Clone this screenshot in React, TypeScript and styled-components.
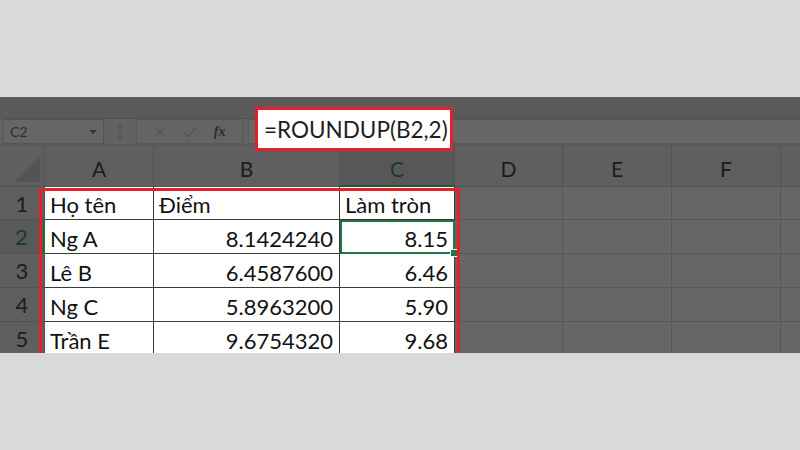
import React from "react";
import styled, { createGlobalStyle } from "styled-components";

const Global = createGlobalStyle`
  html, body { margin: 0; padding: 0; background: #d9d9d9; }
  body { width: 800px; height: 450px; overflow: hidden; font-family: Lato, "Liberation Sans", sans-serif; }
`;

const Page = styled.div`
  position: relative;
  width: 800px;
  height: 450px;
  display: flex;
  flex-direction: column;
  background: #d9d9d9;
  overflow: hidden;
`;

const Spacer = styled.div<{ $h: number }>`
  height: ${(p) => p.$h}px;
  flex: none;
`;

const Excel = styled.div`
  position: relative;
  height: 256px;
  flex: none;
  display: flex;
  flex-direction: column;
  background: #666666;
  overflow: hidden;
`;

const Ribbon = styled.div`
  height: 22px;
  flex: none;
  background: #5a5a5a;
  border-bottom: 1px solid #525252;
  box-sizing: border-box;
`;

const FormulaRow = styled.div`
  height: 26px;
  flex: none;
  display: flex;
  align-items: stretch;
  background: #626262;
  padding-left: 3px;
  box-sizing: border-box;
  border-bottom: 1px solid #585858;
`;

const NameBox = styled.div`
  width: 101px;
  box-sizing: border-box;
  border: 1px solid #565656;
  background: #666666;
  display: flex;
  align-items: center;
  justify-content: space-between;
  padding: 0 6px 0 6px;
  font-family: Lato, "Liberation Sans", sans-serif;
  font-size: 14px;
  color: #2f2f2f;
`;

const Caret = styled.span`
  width: 0;
  height: 0;
  border-left: 4px solid transparent;
  border-right: 4px solid transparent;
  border-top: 4px solid #333;
`;

const Grip = styled.div`
  width: 32px;
  display: flex;
  align-items: center;
  justify-content: center;
`;

const FuncBox = styled.div`
  width: 107px;
  box-sizing: border-box;
  border: 1px solid #595959;
  background: #646464;
  display: flex;
  align-items: center;
  justify-content: space-around;
  padding: 0 8px;
`;

const Fx = styled.span`
  font-family: "Liberation Serif", serif;
  font-style: italic;
  font-weight: bold;
  font-size: 14px;
  color: #2e2e2e;
`;

const FormulaInput = styled.div`
  flex: 1;
  margin-left: 5px;
  background: #676767;
  border: 1px solid #595959;
  border-right: none;
`;

const Grid = styled.div`
  flex: 1;
  display: grid;
  grid-template-columns: 45px 109px 186px 115px 108px 109px 109px 109px;
  grid-template-rows: 42px 33px 34px 34px 34px 34px;
`;

const Corner = styled.div`
  background: #5f5f5f;
  border-right: 1px solid #545454;
  border-bottom: 1px solid #545454;
  box-sizing: border-box;
  display: flex;
  align-items: flex-end;
  justify-content: flex-end;
  padding: 0 4px 4px 0;
`;

const ColHead = styled.div<{ $active?: boolean }>`
  background: ${(p) => (p.$active ? "#575757" : "#5f5f5f")};
  border-right: 1px solid #535353;
  border-bottom: ${(p) => (p.$active ? "2px solid #1f5a35" : "1px solid #545454")};
  box-sizing: border-box;
  display: flex;
  align-items: center;
  justify-content: center;
  padding-top: 6px;
  font-family: Lato, "Liberation Sans", sans-serif;
  font-size: 21px;
  color: ${(p) => (p.$active ? "#173d24" : "#1c1c1c")};
`;

const RowHead = styled.div<{ $active?: boolean }>`
  background: ${(p) => (p.$active ? "#595959" : "#5f5f5f")};
  border-right: ${(p) => (p.$active ? "2px solid #1f6a3c" : "1px solid #545454")};
  border-bottom: 1px solid #545454;
  box-sizing: border-box;
  display: flex;
  align-items: center;
  justify-content: center;
  font-family: Lato, "Liberation Sans", sans-serif;
  font-size: 22px;
  color: ${(p) => (p.$active ? "#173d24" : "#1c1c1c")};
`;

const Cell = styled.div<{ $filled?: boolean; $right?: boolean; $selected?: boolean }>`
  position: relative;
  background: ${(p) => (p.$filled ? "#ffffff" : "#666666")};
  border-right: 1px solid ${(p) => (p.$filled ? "#3a3a3a" : "#585858")};
  border-bottom: 1px solid ${(p) => (p.$filled ? "#3a3a3a" : "#585858")};
  box-sizing: border-box;
  display: flex;
  align-items: center;
  justify-content: ${(p) => (p.$right ? "flex-end" : "flex-start")};
  padding: 3px 6px 0 5px;
  font-family: Lato, "Liberation Sans", sans-serif;
  font-size: 22px;
  color: #111;
  white-space: nowrap;
  ${(p) => (p.$selected ? "outline: 2px solid #217346; outline-offset: -2px;" : "")}
`;

const Handle = styled.span`
  position: absolute;
  right: -4px;
  bottom: -4px;
  width: 6px;
  height: 6px;
  background: #217346;
  border: 1px solid #fff;
  z-index: 2;
`;

const TableFrame = styled.div`
  position: absolute;
  left: 39px;
  top: 91px;
  width: 421px;
  height: 168px;
  border: 3px solid #e5202b;
  box-sizing: border-box;
  pointer-events: none;
  z-index: 3;
`;

const FormulaCallout = styled.div`
  position: absolute;
  left: 255px;
  top: 107px;
  width: 198px;
  height: 44px;
  box-sizing: border-box;
  border: 3px solid #e5202b;
  background: #ffffff;
  display: flex;
  align-items: center;
  padding-left: 6px;
  font-family: Lato, "Liberation Sans", sans-serif;
  font-size: 22.5px;
  color: #1e1e1e;
  z-index: 4;
`;

const cols = ["A", "B", "C", "D", "E", "F", ""];

const data: [string, string, string][] = [
  ["Họ tên", "Điểm", "Làm tròn"],
  ["Ng A", "8.1424240", "8.15"],
  ["Lê B", "6.4587600", "6.46"],
  ["Ng C", "5.8963200", "5.90"],
  ["Trần E", "9.6754320", "9.68"],
];

export default function App() {
  return (
    <>
      <Global />
      <Page>
        <Spacer $h={97} />
        <Excel>
          <Ribbon />
          <FormulaRow>
            <NameBox>
              <span>C2</span>
              <Caret />
            </NameBox>
            <Grip>
              <svg width="4" height="14" viewBox="0 0 4 14">
                <circle cx="2" cy="2" r="1.2" fill="#4f4f4f" />
                <circle cx="2" cy="7" r="1.2" fill="#4f4f4f" />
                <circle cx="2" cy="12" r="1.2" fill="#4f4f4f" />
              </svg>
            </Grip>
            <FuncBox>
              <svg width="12" height="12" viewBox="0 0 12 12">
                <path d="M1.5 1.5 L10.5 10.5 M10.5 1.5 L1.5 10.5" stroke="#565656" strokeWidth="1.4" />
              </svg>
              <svg width="14" height="12" viewBox="0 0 14 12">
                <path d="M1 6.5 L5 10.5 L13 1.5" stroke="#565656" strokeWidth="1.6" fill="none" />
              </svg>
              <Fx>fx</Fx>
            </FuncBox>
            <FormulaInput />
          </FormulaRow>
          <Grid>
            <Corner>
              <svg width="26" height="25" viewBox="0 0 26 25">
                <path d="M26 0 L26 25 L0 25 Z" fill="#545454" />
              </svg>
            </Corner>
            {cols.map((c, i) => (
              <ColHead key={i} $active={c === "C"}>
                {c}
              </ColHead>
            ))}
            {[0, 1, 2, 3, 4].map((r) => (
              <React.Fragment key={r}>
                <RowHead $active={r === 1}>{r + 1}</RowHead>
                <Cell $filled>{data[r][0]}</Cell>
                <Cell $filled $right={r > 0}>
                  {data[r][1]}
                </Cell>
                <Cell $filled $right={r > 0} $selected={r === 1}>
                  {data[r][2]}
                  {r === 1 && <Handle />}
                </Cell>
                {[0, 1, 2, 3].map((k) => (
                  <Cell key={k} />
                ))}
              </React.Fragment>
            ))}
          </Grid>
          <TableFrame />
        </Excel>
        <FormulaCallout>=ROUNDUP(B2,2)</FormulaCallout>
      </Page>
    </>
  );
}
